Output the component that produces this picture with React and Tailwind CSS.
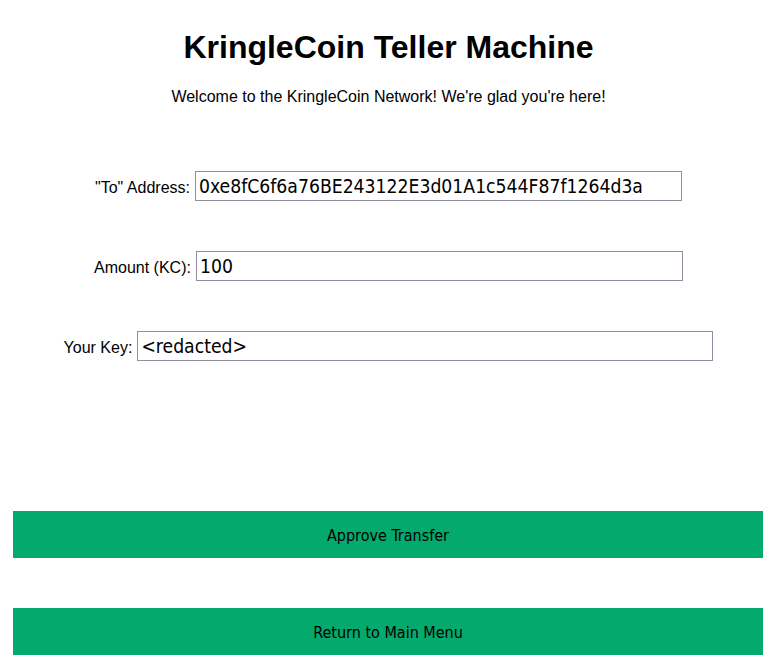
import React from 'react';

const Field = ({ label, value, width }) => (
  <div className="flex items-baseline justify-center gap-[5px]">
    <label className="text-[16px] text-black" style={{ fontFamily: '"Liberation Sans", Arial, sans-serif' }}>
      {label}
    </label>
    <input
      readOnly
      value={value}
      className={`${width} h-[30px] border border-[#8f8f9d] px-[3px] text-[19.2px] text-black outline-none`}
      style={{ fontFamily: '"DejaVu Sans Condensed", "DejaVu Sans", sans-serif' }}
    />
  </div>
);

const Button = ({ children }) => (
  <button
    className="mx-[13px] w-[750px] h-[47px] bg-[#04a96d] text-black text-[16px] flex items-center justify-center pt-[3px]"
    style={{ fontFamily: '"DejaVu Sans Condensed", "DejaVu Sans", sans-serif' }}
  >
    {children}
  </button>
);

export default function App() {
  return (
    <div className="w-[777px] h-[660px] bg-white overflow-hidden" style={{ fontFamily: '"Liberation Sans", Arial, sans-serif' }}>
      <div className="pt-[29px] text-center">
        <h1 className="text-[32px] leading-[37px] font-bold text-black">KringleCoin Teller Machine</h1>
        <p className="mt-[22px] text-[16px] leading-[18px] text-black">
          Welcome to the KringleCoin Network! We're glad you're here!
        </p>
      </div>

      <div className="mt-[65px] flex flex-col gap-[50px]">
        <Field label={'"To" Address:'} value="0xe8fC6f6a76BE243122E3d01A1c544F87f1264d3a" width="w-[487px]" />
        <Field label="Amount (KC):" value="100" width="w-[487px]" />
        <Field label="Your Key:" value="<redacted>" width="w-[576px]" />
      </div>

      <div className="mt-[150px] flex flex-col gap-[50px]">
        <Button>Approve Transfer</Button>
        <Button>Return to Main Menu</Button>
      </div>
    </div>
  );
}
